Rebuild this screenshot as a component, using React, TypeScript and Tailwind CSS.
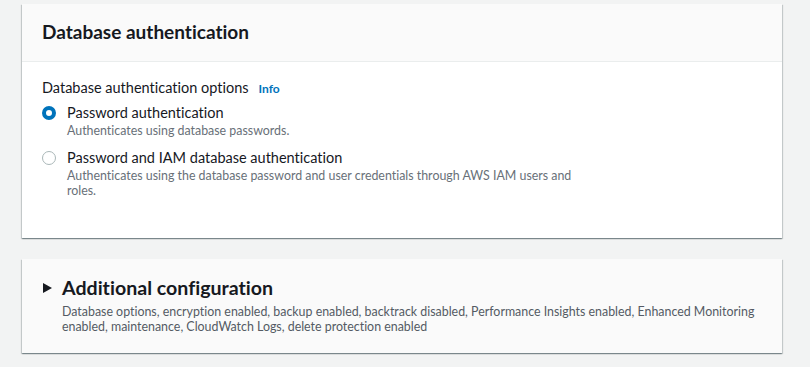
const font = { fontFamily: 'Lato, "Open Sans", Arial, sans-serif' };

const Radio = ({ checked }: { checked: boolean }) =>
  checked ? (
    <span className="mt-[3px] box-border block h-[14px] w-[14px] shrink-0 rounded-full border-[4px] border-[#0073bb] bg-white" />
  ) : (
    <span className="mt-[3px] box-border block h-[14px] w-[14px] shrink-0 rounded-full border border-[#aab7b8] bg-white" />
  );

const Option = ({ checked, label, desc }: { checked: boolean; label: string; desc: string }) => (
  <div className="flex gap-[11px]">
    <Radio checked={checked} />
    <div>
      <div className="text-[14.5px] leading-[20px] text-[#16191f]">{label}</div>
      <div className="max-w-[515px] text-[12.4px] leading-[15px] text-[#687078]">{desc}</div>
    </div>
  </div>
);

export default function App() {
  return (
    <div className="min-h-[367px] bg-[#f2f3f3] px-[22px] pt-[4px] pr-[28px] [font-variant-ligatures:none]" style={font}>
      <section className="bg-white shadow-[0_1px_1px_0_rgba(0,28,36,0.3),1px_1px_1px_0_rgba(0,28,36,0.15),-1px_1px_1px_0_rgba(0,28,36,0.15)]">
        <div className="border-b border-[#eaeded] bg-[#fafafa] px-[20px] pt-[16px] pb-[17px]">
          <h2 className="text-[19px] font-bold leading-[24px] text-[#16191f]">Database authentication</h2>
        </div>
        <div className="px-[20px] pt-[16px] pb-[40px]">
          <div className="mb-[5px] flex items-baseline gap-[10px]">
            <span className="text-[14.5px] leading-[20px] text-[#16191f]">Database authentication options</span>
            <span className="text-[12px] font-bold text-[#0073bb]">Info</span>
          </div>
          <div className="flex flex-col gap-[10px]">
            <Option checked label="Password authentication" desc="Authenticates using database passwords." />
            <Option
              checked={false}
              label="Password and IAM database authentication"
              desc="Authenticates using the database password and user credentials through AWS IAM users and roles."
            />
          </div>
        </div>
      </section>

      <section className="mt-[21px] bg-[#fafafa] pl-[21px] pr-[14px] pt-[16px] pb-[19px] shadow-[0_1px_1px_0_rgba(0,28,36,0.3),1px_1px_1px_0_rgba(0,28,36,0.15),-1px_1px_1px_0_rgba(0,28,36,0.15)]">
        <div className="flex items-center gap-[10px]">
          <svg width="9" height="10" viewBox="0 0 9 10" className="shrink-0">
            <polygon points="0,0 9,5 0,10" fill="#16191f" />
          </svg>
          <h2 className="text-[19.6px] font-bold leading-[26px] text-[#16191f]">Additional configuration</h2>
        </div>
        <p className="mt-[3px] pl-[19px] text-[12.4px] leading-[15px] text-[#545b64]">
          Database options, encryption enabled, backup enabled, backtrack disabled, Performance Insights enabled, Enhanced Monitoring enabled, maintenance, CloudWatch Logs, delete protection enabled
        </p>
      </section>
    </div>
  );
}
